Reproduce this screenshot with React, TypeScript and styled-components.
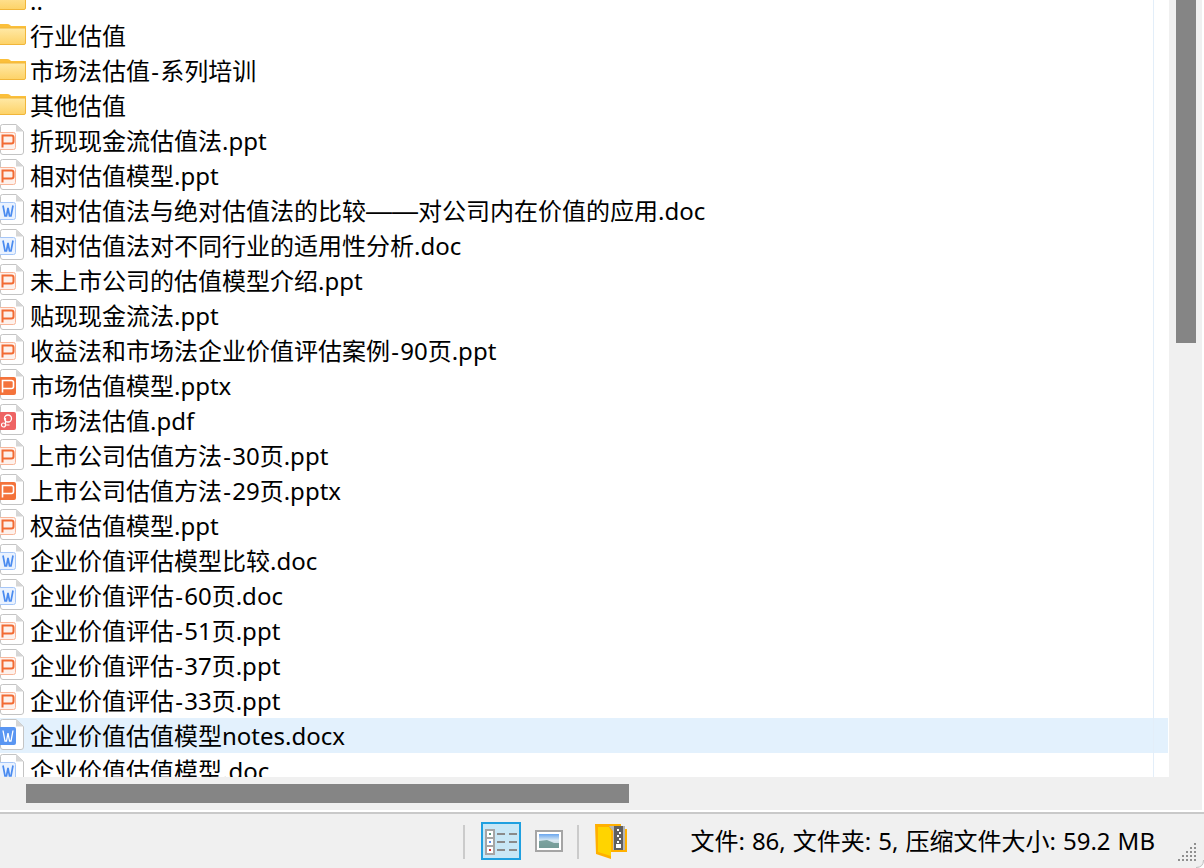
import React from 'react';
import styled, { createGlobalStyle } from 'styled-components';

type FileKind = 'folder' | 'ppt' | 'pptx' | 'doc' | 'docx' | 'pdf';

interface FileRow {
  name: string;
  kind: FileKind;
  selected?: boolean;
}

const rows: FileRow[] = [
  { name: '..', kind: 'folder' },
  { name: '行业估值', kind: 'folder' },
  { name: '市场法估值-系列培训', kind: 'folder' },
  { name: '其他估值', kind: 'folder' },
  { name: '折现现金流估值法.ppt', kind: 'ppt' },
  { name: '相对估值模型.ppt', kind: 'ppt' },
  { name: '相对估值法与绝对估值法的比较——对公司内在价值的应用.doc', kind: 'doc' },
  { name: '相对估值法对不同行业的适用性分析.doc', kind: 'doc' },
  { name: '未上市公司的估值模型介绍.ppt', kind: 'ppt' },
  { name: '贴现现金流法.ppt', kind: 'ppt' },
  { name: '收益法和市场法企业价值评估案例-90页.ppt', kind: 'ppt' },
  { name: '市场估值模型.pptx', kind: 'pptx' },
  { name: '市场法估值.pdf', kind: 'pdf' },
  { name: '上市公司估值方法-30页.ppt', kind: 'ppt' },
  { name: '上市公司估值方法-29页.pptx', kind: 'pptx' },
  { name: '权益估值模型.ppt', kind: 'ppt' },
  { name: '企业价值评估模型比较.doc', kind: 'doc' },
  { name: '企业价值评估-60页.doc', kind: 'doc' },
  { name: '企业价值评估-51页.ppt', kind: 'ppt' },
  { name: '企业价值评估-37页.ppt', kind: 'ppt' },
  { name: '企业价值评估-33页.ppt', kind: 'ppt' },
  { name: '企业价值估值模型notes.docx', kind: 'docx', selected: true },
  { name: '企业价值估值模型.doc', kind: 'doc' },
];

const GlobalStyle = createGlobalStyle`
  html, body {
    margin: 0;
    height: 100%;
    overflow: hidden;
    background: #f0f0f0;
  }
  #root {
    height: 100%;
  }
`;

const Window = styled.div`
  width: 1204px;
  height: 868px;
  display: grid;
  grid-template-rows: 810px 58px;
  font-family: "Noto Sans", "Noto Sans CJK SC", sans-serif;
  color: #000;
  overflow: hidden;
`;

const Browser = styled.div`
  display: grid;
  grid-template-columns: 1169px 33px 2px;
  grid-template-rows: 777px 33px;
  background: #f0f0f0;
`;

const ListPane = styled.div`
  position: relative;
  background: #fff;
  overflow: hidden;
`;

const ColumnLine = styled.div`
  position: absolute;
  top: 0;
  bottom: 0;
  left: 1153px;
  width: 1px;
  background: #e3eef9;
`;

const List = styled.div`
  width: 1168px;
  margin-top: -17px;
`;

const Row = styled.div<{ $selected?: boolean }>`
  height: 35px;
  display: flex;
  align-items: center;
  gap: 6px;
  background: ${(p) => (p.$selected ? '#e3f1fd' : 'transparent')};
  font-size: 24px;
  line-height: 35px;
  white-space: nowrap;
`;

const IconSlot = styled.span`
  flex: 0 0 24px;
  width: 24px;
  height: 35px;
  display: block;
`;

const Name = styled.span`
  display: block;
`;

const Hyphen = styled.span`
  margin: 0 1.25px;
`;

const LongDash = styled.span`
  font-family: "Liberation Sans", sans-serif;
  font-size: 26px;
  line-height: 1;
`;

const VTrack = styled.div`
  padding: 0 7px;
`;

const VThumb = styled.div`
  width: 20px;
  height: 343px;
  background: #858585;
`;

const WhiteEdge = styled.div`
  grid-row: 1 / span 2;
  grid-column: 3;
  background: #fff;
`;

const HTrack = styled.div`
  grid-column: 1 / span 2;
  padding: 7px 0 0 26px;
`;

const HThumb = styled.div`
  width: 603px;
  height: 19px;
  background: #858585;
`;

const StatusBar = styled.div`
  position: relative;
  border-top: 2px solid #fff;
  display: flex;
  flex-direction: column;
`;

const StatusRule = styled.div`
  height: 2px;
  background: #c9c9c9;
`;

const StatusBody = styled.div`
  flex: 1;
  display: flex;
  align-items: center;
  padding: 0 49px 0 463px;
  background: #f0f0f0;
`;

const Divider = styled.div<{ $spaced?: boolean }>`
  width: 2px;
  height: 34px;
  margin: 1px ${(p) => (p.$spaced ? '16px' : '0')} 0 ${(p) => (p.$spaced ? '14px' : '0')};
  background: #cbcbcb;
`;

const ViewButton = styled.div`
  box-sizing: border-box;
  width: 40px;
  height: 38px;
  margin: 0 14px 0 16px;
  border: 2px solid #1fa0e0;
  background: #c8e7f6;
  display: flex;
  align-items: center;
  justify-content: center;
`;

const StatusText = styled.div`
  margin-left: auto;
  font-size: 24px;
  line-height: 1;
  word-spacing: 0.8px;
  white-space: nowrap;
`;

const Grip = styled.svg`
  position: absolute;
  right: 0;
  bottom: 0;
`;

const FileName = ({ name }: { name: string }) => {
  // the hyphen and the long dash run wider in the original UI font
  const parts = name.split(/(-|——)/);
  return (
    <Name>
      {parts.map((part, i) => {
        if (part === '-') return <Hyphen key={i}>-</Hyphen>;
        if (part === '——') return <LongDash key={i}>——</LongDash>;
        return part;
      })}
    </Name>
  );
};

const FolderIcon = () => (
  <svg width="30" height="35" viewBox="0 0 30 35" style={{ marginLeft: -4, display: 'block' }}>
    <defs>
      <linearGradient id="folderFill" x1="0" y1="0" x2="0" y2="1">
        <stop offset="0" stopColor="#ffe9a6" />
        <stop offset="1" stopColor="#fdd267" />
      </linearGradient>
    </defs>
    <path d="M0 6 H11 Q13 6 14 7 L15 8 H30 V11 H0 Z" fill="#fbbf3a" />
    <path d="M0 10 H29.5 V25 Q29.5 26.5 28 26.5 H0 Z" fill="url(#folderFill)" stroke="#f1b63a" strokeWidth="1" />
  </svg>
);

const PageOutline = () => (
  <>
    <path d="M2.5 1.5 H16 L23.5 8.5 V29 Q23.5 31.5 21 31.5 H3 Q0.5 31.5 0.5 29 V3.5 Q0.5 1.5 2.5 1.5 Z" fill="#fff" stroke="#c4c4c4" strokeWidth="1" />
    <path d="M16 1.5 V8.5 H23.5 Z" fill="#d6d6d6" />
  </>
);

const P_MARK = 'M2.5 24.5 V12.5 H11.5 Q13.5 12.5 13.5 14.5 V18.5 Q13.5 20.5 11.5 20.5 H2.5';
const W_MARK = 'M3 12.5 L5 23 H6.5 L8 15 L9.5 23 H11 L13 12.5';

const FileIcon = ({ kind }: { kind: FileKind }) => {
  let badge = null;
  if (kind === 'ppt') {
    badge = (
      <>
        <rect x="-1.5" y="9.5" width="17" height="17" rx="2" fill="#fdf1ec" stroke="#f9b69a" strokeWidth="1" />
        <path d={P_MARK} fill="none" stroke="#f26b33" strokeWidth="2" />
      </>
    );
  }
  if (kind === 'pptx') {
    badge = (
      <>
        <rect x="-2" y="9" width="18" height="18" rx="2" fill="#f4733b" />
        <path d={P_MARK} fill="none" stroke="#fff" strokeWidth="1.6" />
      </>
    );
  }
  if (kind === 'doc') {
    badge = (
      <>
        <rect x="-1.5" y="9.5" width="17" height="17" rx="2" fill="#eaf2fe" stroke="#a5c6f8" strokeWidth="1" />
        <path d={W_MARK} fill="none" stroke="#4a8bf0" strokeWidth="1.7" />
      </>
    );
  }
  if (kind === 'docx') {
    badge = (
      <>
        <rect x="-2" y="9" width="18" height="18" rx="2" fill="#5a96f2" />
        <path d={W_MARK} fill="none" stroke="#fff" strokeWidth="1.3" />
      </>
    );
  }
  if (kind === 'pdf') {
    badge = (
      <>
        <rect x="-2" y="9" width="18" height="18" rx="2" fill="#ee6363" />
        <circle cx="8" cy="15.5" r="3.5" fill="none" stroke="#fff" strokeWidth="1.3" />
        <circle cx="3.5" cy="22" r="2" fill="none" stroke="#fff" strokeWidth="1.2" />
        <path d="M5.5 22 H9.5 M5.5 15 V21" fill="none" stroke="#fff" strokeWidth="1.2" />
      </>
    );
  }
  return (
    <svg width="24" height="35" viewBox="0 0 24 35" style={{ display: 'block' }}>
      <PageOutline />
      {badge}
    </svg>
  );
};

const DetailsGlyph = () => (
  <svg width="36" height="34" viewBox="0 0 36 34" style={{ display: 'block' }}>
    <rect x="2" y="5" width="10" height="26" fill="#a5a5a5" />
    <rect x="4" y="7" width="6" height="6" fill="#fff" />
    <rect x="4" y="15" width="6" height="6" fill="#fff" />
    <rect x="4" y="23" width="6" height="6" fill="#fff" />
    <rect x="6" y="9" width="2" height="2" fill="#5e9a82" />
    <rect x="6" y="17" width="2" height="2" fill="#5b8fe8" />
    <rect x="6" y="25" width="2" height="2" fill="#d92a2a" />
    <path d="M14 10 H22 M26 10 H34 M14 18 H22 M26 18 H34 M14 26 H22 M26 26 H34" stroke="#8a8a8a" strokeWidth="2" />
  </svg>
);

const PreviewGlyph = () => (
  <svg width="28" height="22" viewBox="0 0 28 22" style={{ display: 'block' }}>
    <defs>
      <linearGradient id="previewSky" x1="0" y1="0" x2="0" y2="1">
        <stop offset="0" stopColor="#6aa6ee" />
        <stop offset="0.45" stopColor="#d9e9f2" />
        <stop offset="1" stopColor="#b9c9cf" />
      </linearGradient>
    </defs>
    <rect x="1" y="1" width="26" height="20" fill="#fff" stroke="#a5a5a5" strokeWidth="2" />
    <rect x="4" y="4" width="20" height="14" fill="url(#previewSky)" />
    <path d="M4 11 L12 10 L19 13 L24 13 V18 H4 Z" fill="#5d8c84" opacity="0.75" />
  </svg>
);

const ArchiveGlyph = () => (
  <svg width="32" height="36" viewBox="0 0 32 36" style={{ display: 'block' }}>
    <path d="M0 1 H26 V6 H32 V29 H16 V36 L1 31 Z" fill="#ffb000" />
    <path d="M3 4 H14 L16 8 V33 L3 29 Z" fill="#ffd400" />
    <path d="M14 3 H30 V27 H18 V8 Z" fill="#b5b5b5" />
    <rect x="19" y="3" width="9" height="24" fill="#5f5f5f" />
    <path d="M22 6 h2 v2 h-2 z M24 9 h2 v2 h-2 z M22 12 h2 v2 h-2 z M24 15 h2 v2 h-2 z M22 18 h2 v2 h-2 z" fill="#fff" />
    <rect x="21" y="21" width="5" height="4" fill="#fff" />
  </svg>
);

const gripDots: [number, number][] = [];
for (let r = 0; r < 5; r++) {
  for (let c = 0; c <= r; c++) {
    gripDots.push([18 - c * 4, 3 + r * 4]);
  }
}

const App: React.FC = () => (
  <>
    <GlobalStyle />
    <Window>
      <Browser>
        <ListPane>
          <ColumnLine />
          <List>
            {rows.map((row) => (
              <Row key={row.name} $selected={row.selected}>
                <IconSlot>
                  {row.kind === 'folder' ? <FolderIcon /> : <FileIcon kind={row.kind} />}
                </IconSlot>
                <FileName name={row.name} />
              </Row>
            ))}
          </List>
        </ListPane>
        <VTrack>
          <VThumb />
        </VTrack>
        <WhiteEdge />
        <HTrack>
          <HThumb />
        </HTrack>
      </Browser>
      <StatusBar>
        <StatusRule />
        <StatusBody>
          <Divider />
          <ViewButton>
            <DetailsGlyph />
          </ViewButton>
          <PreviewGlyph />
          <Divider $spaced />
          <ArchiveGlyph />
          <StatusText>文件: 86, 文件夹: 5, 压缩文件大小: 59.2 MB</StatusText>
        </StatusBody>
        <Grip width="28" height="28" viewBox="0 0 28 28">
          {gripDots.map(([x, y]) => (
            <rect key={`${x}-${y}`} x={x} y={y} width="2" height="2" fill="#8f8f8f" />
          ))}
          <path d="M28 18 Q28 28 18 28 H28 Z" fill="#fff" />
          <path d="M27.5 20 Q27.5 27.5 20 27.5" fill="none" stroke="#bdbdbd" strokeWidth="1" />
        </Grip>
      </StatusBar>
    </Window>
  </>
);

export default App;
